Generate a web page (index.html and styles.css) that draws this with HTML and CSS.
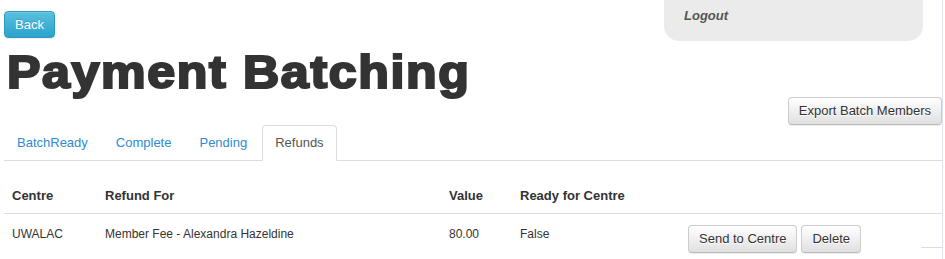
FILE: index.html
```html
<!DOCTYPE html>
<html lang="en">
<head>
<meta charset="utf-8">
<title>Payment Batching</title>
<link rel="stylesheet" href="styles.css">
</head>
<body>
<div class="page">
  <div class="top">
    <button class="btn btn-info">Back</button>
    <div class="userbox"><span class="logout">Logout</span></div>
  </div>
  <h1 class="title">Payment Batching</h1>
  <div class="actions">
    <button class="btn btn-default">Export Batch Members</button>
  </div>
  <ul class="tabs">
    <li><a>BatchReady</a></li>
    <li><a>Complete</a></li>
    <li><a>Pending</a></li>
    <li class="active"><a>Refunds</a></li>
  </ul>
  <table class="grid">
    <colgroup>
      <col class="c1"><col class="c2"><col class="c3"><col class="c4"><col class="c5"><col class="c6">
    </colgroup>
    <thead>
      <tr><th>Centre</th><th>Refund For</th><th>Value</th><th>Ready for Centre</th><th></th><th></th></tr>
    </thead>
    <tbody>
      <tr>
        <td>UWALAC</td>
        <td>Member Fee - Alexandra Hazeldine</td>
        <td>80.00</td>
        <td>False</td>
        <td class="btncell"><div class="btns"><button class="btn btn-default">Send to Centre</button><button class="btn btn-default">Delete</button></div></td>
        <td class="tail"><div class="tailline"></div></td>
      </tr>
    </tbody>
  </table>
</div>
</body>
</html>
```
FILE: styles.css
```css
html, body {
  margin: 0;
  padding: 0;
  background: #fff;
}
body {
  font-family: "Liberation Sans", Arial, sans-serif;
  color: #333;
  font-size: 13px;
}
.page {
  margin-left: 4px;
  width: 939px;
  border-right: 1px solid #dde3e8;
  min-height: 259px;
  box-sizing: border-box;
}
.top {
  display: flex;
  justify-content: space-between;
  align-items: flex-start;
  height: 41px;
  margin-bottom: 6px;
}
.btn {
  font-family: "Liberation Sans", Arial, sans-serif;
  font-size: 13px;
  line-height: 16px;
  padding: 5px 10px;
  border-radius: 4px;
  border: 1px solid #ccc;
  cursor: pointer;
  display: inline-block;
}
.btn-info {
  margin-top: 11px;
  line-height: 15px;
  color: #fff;
  background: linear-gradient(to bottom, #5bc0de 0%, #2aa3cc 100%);
  border-color: #2a9cc4;
  text-shadow: 0 -1px 0 rgba(0,0,0,.15);
  box-shadow: inset 0 1px 0 rgba(255,255,255,.15), 0 1px 1px rgba(0,0,0,.075);
}
.btn-default {
  color: #333;
  background: linear-gradient(to bottom, #fff 0%, #e0e0e0 100%);
  border-color: #ccc #ccc #bbb;
  text-shadow: 0 1px 0 #fff;
  box-shadow: inset 0 1px 0 rgba(255,255,255,.15), 0 1px 1px rgba(0,0,0,.075);
}
.userbox {
  width: 259px;
  height: 41px;
  margin-right: 19px;
  background: #ebebeb;
  border-radius: 0 0 15px 15px;
  box-sizing: border-box;
  padding: 8px 0 0 20px;
}
.logout {
  font-weight: bold;
  font-style: italic;
  font-size: 13px;
  color: #555;
}
.title {
  margin: 0 0 0 3px;
  width: fit-content;
  font-family: "Liberation Sans", Arial, sans-serif;
  font-weight: bold;
  font-size: 46px;
  line-height: 50px;
  height: 50px;
  color: #333;
  letter-spacing: 1.5px;
  -webkit-text-stroke: 2.2px #333;
  transform: scaleX(1.09);
  transform-origin: left center;
  white-space: nowrap;
}
.actions {
  display: flex;
  justify-content: flex-end;
  height: 28px;
}
.actions .btn {
  margin-right: 0;
  height: 28px;
}
.tabs {
  list-style: none;
  margin: 0;
  padding: 0;
  display: flex;
  border-bottom: 1px solid #ddd;
}
.tabs li {
  margin-bottom: -1px;
  margin-right: 2px;
}
.tabs a {
  display: block;
  padding: 8px 12px;
  line-height: 18px;
  font-size: 13px;
  color: #2f8bd3;
  border: 1px solid transparent;
  border-radius: 4px 4px 0 0;
}
.tabs li.active a {
  color: #555;
  background: #fff;
  border-color: #ddd #ddd transparent;
}
.grid {
  margin-top: 16px;
  width: 938px;
  table-layout: fixed;
  border-collapse: collapse;
}
.c1 { width: 93px; }
.c2 { width: 344px; }
.c3 { width: 71px; }
.c4 { width: 168px; }
.c5 { width: 241px; }
.c6 { width: 21px; }
.grid th {
  text-align: left;
  font-size: 13px;
  font-weight: bold;
  padding: 9px 8px 7px;
  line-height: 20px;
  border-bottom: 1px solid #ddd;
}
.grid td {
  font-size: 12px;
  padding: 10px 8px 8px;
  line-height: 20px;
  vertical-align: top;
}
.grid td.btncell {
  padding-top: 11px;
}
.btns {
  display: flex;
  gap: 4px;
}
.grid td.tail {
  padding: 0;
}
.tailline {
  height: 33px;
  border-bottom: 1px solid #ddd;
}
```
